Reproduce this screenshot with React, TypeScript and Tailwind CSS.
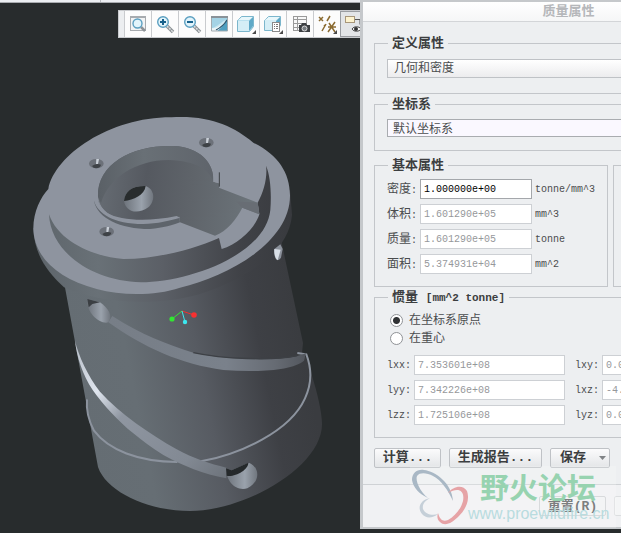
import { useState } from "react";

const massProps = [
  { id: "density", label: "密度", value: "1.000000e+00", unit: "tonne/mm^3" },
  { id: "volume", label: "体积", value: "1.601290e+05", unit: "mm^3" },
  { id: "mass", label: "质量", value: "1.601290e+05", unit: "tonne" },
  { id: "area", label: "面积", value: "5.374931e+04", unit: "mm^2" },
];

const inertia = [
  { a: "lxx", av: "7.353601e+08", b: "lxy", bv: "0.000000e+00" },
  { a: "lyy", av: "7.342226e+08", b: "lxz", bv: "-4.215370e+05" },
  { a: "lzz", av: "1.725106e+08", b: "lyz", bv: "0.000000e+00" },
];

const MONO = "font-['Liberation_Mono','Noto_Sans_CJK_SC',monospace]";

const fieldsetCls = "border border-[#c3c6ca] px-3 min-w-0";
const legendCls = "ml-px px-1 pt-[2px] text-[13px] leading-4 font-bold text-[#3c3e40]";
const disabledInput =
  "h-5 border border-[#cdd0d4] bg-white px-[3px] text-[10px] text-[#96989b]";
const buttonCls =
  "h-5 rounded-[2px] border border-[#bfc2c6] bg-linear-to-b from-[#fbfbfc] to-[#e4e6e8] text-[13px] leading-4 font-bold text-[#3c3e40]";

function Lens({ sign }: { sign?: string }) {
  return (
    <g>
      <path d="M12 12l6 6" stroke="#8d9296" strokeWidth="3.500" />
      <path d="M12 12l6 6" stroke="#dfe2e4" strokeWidth="1.500" strokeDasharray="2 1" />
      <circle cx="8" cy="8" r="5.300" fill="#e2f4fb" stroke="#5b9fc0" strokeWidth="1.400" />
      {sign && <path d={sign} stroke="#17618c" strokeWidth="2" />}
    </g>
  );
}

function Corner() {
  return <path d="M20 16v4h-4z" fill="#4a4a4a" />;
}

const tools = [
  {
    name: "重新调整",
    icon: (
      <g>
        <rect x="2.500" y="2.500" width="15" height="14" fill="#f2f3f4" stroke="#a7abaf" />
        <path d="M2 3.500h16" stroke="#a7abaf" />
        <path d="M13 13l4 4" stroke="#8d9296" strokeWidth="2.500" />
        <circle cx="9.500" cy="9.500" r="4.500" fill="#e2f4fb" stroke="#5b9fc0" strokeWidth="1.400" />
      </g>
    ),
  },
  { name: "放大", icon: <Lens sign="M5 8h6M8 5v6" /> },
  { name: "缩小", icon: <Lens sign="M5 8h6" /> },
  {
    name: "重画",
    icon: (
      <g>
        <rect x="3" y="3" width="15" height="14" fill="#c9e8f2" />
        <path d="M3 3h15v2C12 8 8 13 3 14z" fill="#a4d3e5" />
        <path d="M18 5v12H8c2-3 6-6 10-12z" fill="#4f9fc0" />
        <path d="M3 14c4 1 8-2 15-8-4 6-7 9-10 11H3z" fill="#eef6f8" />
        <path d="M7 16c4-2 8-5 11-10" stroke="#2d5870" strokeWidth="1.300" fill="none" />
        <path d="M2.500 3h16v14h-16z" fill="none" stroke="#a3abb0" />
        <path d="M2 3h17" stroke="#8a9298" strokeWidth="2" />
      </g>
    ),
  },
  {
    name: "显示样式",
    icon: (
      <g>
        <path d="M1.500 6.500l4-4h12v10l-4 5h-12z" fill="#b9e0ee" stroke="#7bb6cc" />
        <path d="M2 6l4-3h11l-4 3z" fill="#e8f7fb" />
        <path d="M13 7l4-4v9l-4 5z" fill="#5fa9c7" />
        <path d="M2 7h11v10H2z" fill="#d5eef6" />
        <Corner />
      </g>
    ),
  },
  {
    name: "已命名视图",
    icon: (
      <g>
        <path d="M1.500 6.500l4-4h12v9l-4 5h-12z" fill="#d5eef6" stroke="#7bb6cc" />
        <path d="M2 6l4-3h11l-4 3z" fill="#e8f7fb" />
        <path d="M13 7l4-4v6h-4z" fill="#5fa9c7" />
        <rect x="9.500" y="8.500" width="7" height="9" fill="#fff" stroke="#8a8a8a" />
        <path d="M11 10.500h1M13 10.500h2M11 12.500h1M13 12.500h2M11 14.500h1M13 14.500h2" stroke="#777" />
        <Corner />
      </g>
    ),
  },
  {
    name: "视图管理器",
    icon: (
      <g>
        <rect x="3.500" y="2.500" width="13" height="14" fill="#f8f8f8" stroke="#9a9a9a" />
        <path d="M3 5.500h14M3 9.500h14M3 13.500h14M7.500 3v13" stroke="#9a9a9a" />
        <path d="M9 11h2l1-2h4l1 2h3v7H9z" fill="#3c3f42" />
        <circle cx="14.500" cy="14.500" r="2.500" fill="#777c80" stroke="#dcdcdc" />
      </g>
    ),
  },
  {
    name: "基准显示",
    icon: (
      <g stroke="#8a6a30" strokeWidth="1.500" fill="none">
        <path d="M2 3l4 4M6 3L2 7M10 7l3-5M8 11l-1 1" />
        <path d="M9 10l-4 7M12 9l6 9M18 8l-7 10M11 13h8" />
        <path d="M20 16v4h-4z" fill="#4a4a4a" stroke="none" />
      </g>
    ),
  },
];

function Toolbar() {
  return (
    <div className="flex h-7 w-[242px] self-end overflow-hidden border-y border-l border-[#c9cbce] bg-[#eceef0]">
      <div className="w-[5px] shrink-0" />
      {tools.map((t) => (
        <button
          key={t.name}
          type="button"
          title={t.name}
          className="flex w-[27px] shrink-0 items-center justify-center border-l border-[#c9cbce] bg-[#fcfcfc]"
        >
          <svg width="21" height="21" viewBox="0 0 21 21">
            {t.icon}
          </svg>
        </button>
      ))}
      <button
        type="button"
        title="注释显示"
        className="flex w-[27px] shrink-0 items-center justify-center border border-[#9a9da1] bg-[#e3e5e7]"
      >
        <svg width="21" height="21" viewBox="0 0 21 21">
          <rect x="2.500" y="2.500" width="9" height="6" fill="#fdf3cf" stroke="#a8977a" />
          <path d="M12 5.500h5v5" stroke="#555" fill="none" />
          <path d="M9 15c2-3 7-3 9 0-2 3-7 3-9 0z" fill="#fff" stroke="#444" />
          <circle cx="13" cy="15" r="2" fill="#333" />
        </svg>
      </button>
    </div>
  );
}

function Model() {
  return (
    <svg className="block w-full" viewBox="0 38 360 495" role="img" aria-label="零件模型">
      <defs>
        <linearGradient id="body" gradientUnits="userSpaceOnUse" x1="78" y1="405" x2="305" y2="360">
          <stop offset="0" stopColor="#656d73" />
          <stop offset=".25" stopColor="#666e74" />
          <stop offset=".55" stopColor="#575b62" />
          <stop offset=".82" stopColor="#3e4045" />
          <stop offset="1" stopColor="#3a3c40" />
        </linearGradient>
        <linearGradient id="rim" gradientUnits="userSpaceOnUse" x1="40" y1="0" x2="816" y2="0">
          <stop offset="0" stopColor="#5d646a" />
          <stop offset=".25" stopColor="#697177" />
          <stop offset=".5" stopColor="#5b5f66" />
          <stop offset=".8" stopColor="#404247" />
          <stop offset="1" stopColor="#383a3e" />
        </linearGradient>
        <linearGradient id="bore" gradientUnits="userSpaceOnUse" x1="235" y1="250" x2="700" y2="300">
          <stop offset="0" stopColor="#666c73" />
          <stop offset=".3" stopColor="#555960" />
          <stop offset=".6" stopColor="#5f646a" />
          <stop offset="1" stopColor="#6c747a" />
        </linearGradient>
        <linearGradient id="chamfer" x1="0" y1="0" x2="1" y2="0">
          <stop offset="0" stopColor="#5a6066" />
          <stop offset=".4" stopColor="#697076" />
          <stop offset="1" stopColor="#5f646b" />
        </linearGradient>
        <linearGradient id="hole" x1="0" y1="0" x2="1" y2="0">
          <stop offset="0" stopColor="#6d737b" />
          <stop offset=".6" stopColor="#9aa2ac" />
          <stop offset="1" stopColor="#70767e" />
        </linearGradient>
        <linearGradient id="groove" gradientUnits="userSpaceOnUse" x1="75" y1="150" x2="530" y2="560">
          <stop offset="0" stopColor="#b5bcc6" />
          <stop offset=".25" stopColor="#dfe5ee" />
          <stop offset=".42" stopColor="#8f96a1" />
          <stop offset=".8" stopColor="#828993" />
          <stop offset="1" stopColor="#6d737b" />
        </linearGradient>
        <linearGradient id="groove2" gradientUnits="userSpaceOnUse" x1="175" y1="0" x2="765" y2="0">
          <stop offset="0" stopColor="#777e87" />
          <stop offset=".6" stopColor="#7a818b" />
          <stop offset=".85" stopColor="#666b73" />
          <stop offset="1" stopColor="#53575e" />
        </linearGradient>
      </defs>

      <path
        d="M64 282L98 467C107 493 150 511 190 511C245 511 322 467 322 424C322 412 317 392 312 376C311 366 307 357 302 353L303 343L280 235Z"
        fill="url(#body)"
      />

      {/* grooves and lower holes */}
      <g transform="translate(50 290) scale(.33333)">
        <path d="M111 328C108 362 115 390 132 422C175 480 265 515 382 516" stroke="#8c939e" strokeWidth="6" fill="none" />
        <path d="M742 189L769 193C785 235 786 280 765 325C720 425 570 492 453 514" stroke="#8c939e" strokeWidth="6" fill="none" />
        <path
          d="M187 78C275 135 350 162 430 188C520 208 670 214 735 200L768 190L762 212C725 243 620 247 520 240C395 224 280 172 175 97Z"
          fill="url(#groove2)"
        />
        <path d="M430 188C520 208 670 212 742 197" stroke="#3d4045" strokeWidth="4" fill="none" />
        <path
          d="M75 152C86 198 112 255 150 305C210 372 300 432 380 478C430 505 480 522 529 533V565C460 552 400 528 340 495C305 474 275 451 250 430C205 394 160 345 128 300C98 255 80 200 75 152Z"
          fill="url(#groove)"
        />
        <path d="M112 27L150 37C175 55 190 78 175 97C150 104 108 70 112 27Z" fill="url(#hole)" />
        <path d="M112 27L150 37L127 42L116 52Z" fill="#3b3f43" />
        <path d="M528 535L545 541L597 518C630 532 632 575 592 595C558 605 528 575 528 535Z" fill="url(#hole)" />
        <path d="M528 535L545 541L595 518C595 540 555 562 530 557Z" fill="#25292b" />
      </g>

      {/* flange and top face */}
      <g transform="translate(20 105) scale(.33333)">
        <path
          d="M40 370C42 445 80 500 132 547C250 600 430 605 560 560C670 520 805 450 816 330L810 255Z"
          fill="url(#rim)"
        />
        <path d="M763 432L781 418L788 432L783 458C771 475 761 460 763 432Z" fill="#8b919b" />
        <path d="M763 432L782 434L773 466C764 457 762 445 763 432Z" fill="#d9dfe7" />
        <path
          d="M40 370C40 320 63 275 85 252C105 150 270 36 455 37C575 31 640 65 700 113C775 150 809 203 810 270C812 410 625 515 480 548C405 573 305 572 230 552C110 520 42 455 40 370Z"
          fill="#8e949f"
        />
        <path
          d="M87 328C115 410 220 455 310 462C410 462 520 433 597 399L605 432C655 418 705 370 718 328L713 293C732 260 743 215 738 182C751 211 755 265 751 315C737 452 500 532 363 532C220 528 92 445 87 328Z"
          fill="url(#rim)"
        />
        <path
          d="M234 275C230 175 340 119 460 123C540 126 584 175 580 230L597 235V248L713 293L718 328L667 308C650 342 620 380 585 392L480 352L478 335C390 355 245 365 234 275Z"
          fill="url(#bore)"
        />
        <path
          d="M234 275C230 175 340 119 460 123C540 126 584 175 580 230C568 195 530 168 445 165C350 165 265 218 243 295Z"
          fill="url(#chamfer)"
        />
        <path d="M650 290L713 293L718 328L667 308Z" fill="#686d74" />
        <path d="M580 207L600 215V247L597 235L580 230Z" fill="#8e949f" />
        <path d="M598 202V245" stroke="#3b3f43" strokeWidth="3" />
        <path
          d="M222 288C233 340 300 372 390 372C430 369 460 360 480 352L478 335C390 355 310 350 270 330C250 320 238 305 235 288Z"
          fill="#5e646b"
        />
        <path
          d="M222 288C233 325 280 357 370 357C410 356 455 346 480 338L470 333C380 352 300 346 262 324C248 314 238 300 235 288Z"
          fill="#8e949f"
        />
        <path d="M312 288C315 260 335 242 377 243C403 252 408 285 385 307C352 330 317 321 312 288Z" fill="url(#hole)" />
        <path d="M312 288C315 260 335 242 377 243C374 270 340 285 312 288Z" fill="#282c2d" />
        {[
          [229, 176],
          [559, 113],
          [260, 380],
        ].map(([x, y]) => (
          <g key={x}>
            <ellipse cx={x} cy={y} rx="22" ry="14" fill="#6c7179" />
            <path d={`M${x} ${y - 14}h8l-3 15h-6z`} fill="#c9cfd7" />
            <path d={`M${x - 13} ${y + 7}q12 -9 27 -4q-2 10 -15 11q-8 0 -12 -7z`} fill="#3e4246" />
          </g>
        ))}
      </g>

      {/* spin centre */}
      <path d="M182 311L172 319" stroke="#32e632" />
      <path d="M182 311L194 315" stroke="#f03030" />
      <path d="M182 311L185 322" stroke="#3ce8f0" />
      <circle cx="172" cy="319" r="2.600" fill="#32e632" />
      <circle cx="194" cy="315" r="2.800" fill="#f83030" />
      <circle cx="185" cy="322" r="2.200" fill="#3ce8f0" />
    </svg>
  );
}

function Watermark() {
  return (
    <div className="pointer-events-none absolute top-[464px] left-[47px] flex h-[62px] w-[206px] bg-white/20">
      <svg width="58" height="58" viewBox="0 0 58 58" className="mt-[2px] shrink-0" fill="none">
        <path
          d="M18 30C9 26 3 19 2 12C2 5 7 1 14 2C25 3 42 15 43 33C38 22 31 12 23 8C17 5 10 4 7 8C5 12 10 24 18 30Z"
          fill="#a9b8c5"
        />
        <path d="M20 30C10 32 7 40 12 46C16 51 23 50 28 46C22 48 15 46 13 41C12 36 15 33 20 30Z" fill="#c5cfd8" />
        <path
          d="M38 25C43 18 53 16 57 23C60 32 56 41 49 48C42 55 35 59 30 54C27 52 27 48 28 45C30 52 33 54 38 52C45 48 51 41 53 33C55 22 48 19 38 25Z"
          fill="#e6a3a6"
        />
      </svg>
      <div className="flex shrink-0 flex-col">
        <span className="ml-3 pt-1 font-['Noto_Sans_CJK_SC',sans-serif] text-[29px] leading-8 font-bold text-[#97d3b0]">
          野火论坛
        </span>
        <span className="font-['Liberation_Sans',sans-serif] text-[16px] leading-6 text-[#b9dcdf]">
          www.proewildfire.cn
        </span>
      </div>
    </div>
  );
}

function MassDialog() {
  const [origin, setOrigin] = useState(true);
  const [density, setDensity] = useState(massProps[0].value);

  return (
    <section
      className={`relative w-[416px] shrink-0 border-2 border-l-3 border-[#c5c8cb] bg-[#edeff1] text-[12px] text-[#4a4c4e] ${MONO}`}
    >
      <h1 className="h-5 border-b border-[#d3d5d8] bg-linear-to-b from-white to-[#f5f6f7] text-center text-[13px] leading-5 font-bold text-[#b5b7ba]">
        质量属性
      </h1>

      <div className="px-[11px] pt-3">
        <fieldset className={`${fieldsetCls} pt-[7px] pb-[15px]`}>
          <legend className={legendCls}>定义属性</legend>
          <select
            aria-label="定义属性"
            className="block h-[19px] w-full appearance-none border border-[#bfc2c6] bg-linear-to-b from-white to-[#ececee] px-[6px] pt-px text-[12px] leading-4"
          >
            <option>几何和密度</option>
          </select>
        </fieldset>

        <fieldset className={`${fieldsetCls} mt-px pt-[6px] pb-[13px]`}>
          <legend className={legendCls}>坐标系</legend>
          <input
            aria-label="坐标系"
            defaultValue="默认坐标系"
            className="block h-[18px] w-full border border-[#a9acb0] bg-[#faf8ff] px-[5px] text-[12px] leading-4"
          />
        </fieldset>

        <div className="mt-[5px] flex gap-[5px]">
          <fieldset className={`${fieldsetCls} w-[234px] shrink-0 pt-[5px] pb-3`}>
            <legend className={legendCls}>基本属性</legend>
            <div className="flex flex-col gap-[5px]">
              {massProps.map((p, i) => (
                <div key={p.id} className="flex h-5 items-center">
                  <label htmlFor={p.id} className="w-[33px] shrink-0 pt-[2px] leading-5 whitespace-nowrap">
                    {p.label}
                    <span className="text-[10px]">:</span>
                  </label>
                  {i === 0 ? (
                    <input
                      id={p.id}
                      value={density}
                      onChange={(e) => setDensity(e.target.value)}
                      className="h-5 w-28 shrink-0 border border-[#a4a7ab] bg-white px-[3px] text-[10px] text-black"
                    />
                  ) : (
                    <input id={p.id} readOnly value={p.value} className={`${disabledInput} w-28 shrink-0`} />
                  )}
                  <span className="ml-[3px] text-[10px]">{p.unit}</span>
                </div>
              ))}
            </div>
          </fieldset>
          <fieldset aria-label="主惯量" className="mt-[9px] min-w-0 flex-1 border border-[#c3c6ca]" />
        </div>

        <fieldset className={`${fieldsetCls} mt-px pt-[5px] pb-3`}>
          <legend className={legendCls}>
            惯量 <span className="text-[11px]">[mm^2 tonne]</span>
          </legend>
          {["在坐标系原点", "在重心"].map((text, i) => (
            <label key={text} className="flex h-[18px] items-center gap-[6px] pl-[3px]">
              <input
                type="radio"
                name="origin"
                checked={origin === (i === 0)}
                onChange={() => setOrigin(i === 0)}
                className="size-[13px] appearance-none rounded-full border border-[#8f9296] bg-white checked:bg-[radial-gradient(circle,#303234_0_3px,#ffffff_4px)]"
              />
              <span className="pt-[2px]">{text}</span>
            </label>
          ))}
          <div className="mt-2 flex flex-col gap-[5px]">
            {inertia.map((r) => (
              <div key={r.a} className="flex h-5 items-center text-[10px]">
                <label htmlFor={r.a} className="w-[27px] shrink-0">
                  {r.a}:
                </label>
                <input id={r.a} readOnly value={r.av} className={`${disabledInput} w-[151px] shrink-0`} />
                <label htmlFor={r.b} className="ml-[10px] w-[27px] shrink-0">
                  {r.b}:
                </label>
                <input id={r.b} readOnly value={r.bv} className={`${disabledInput} min-w-0 flex-1`} />
              </div>
            ))}
          </div>
        </fieldset>

        <div className="mt-[10px] flex gap-2">
          <button type="button" className={`${buttonCls} w-[67px]`}>
            计算...
          </button>
          <button type="button" className={`${buttonCls} w-[93px]`}>
            生成报告...
          </button>
          <button type="button" className={`${buttonCls} flex w-[60px] items-center justify-between pr-[3px] pl-[9px]`}>
            保存
            <svg width="7" height="4" viewBox="0 0 7 4">
              <path d="M0 0h7L3.500 4z" fill="#808386" />
            </svg>
          </button>
        </div>
      </div>

      <div className="mt-4 flex gap-2 border-t border-[#cfd2d5] bg-[#f0f1f3] pt-[11px] pb-[11px] pl-44">
        <button
          type="button"
          className="h-5 w-[67px] rounded-[2px] border border-[#cfd1d4] bg-[#f1f2f3] pt-px text-[13px] leading-4 font-bold text-[#5c5e60]"
        >
          重置<span>(R)</span>
        </button>
        <button type="button" aria-label="关闭" className="h-5 w-[67px] rounded-[2px] border border-[#dcdee0] bg-[#f4f5f6]" />
      </div>
      <Watermark />
    </section>
  );
}

export default function App() {
  return (
    <main className="flex min-h-screen items-start overflow-hidden bg-[#282c2d]">
      <div className="flex w-[360px] shrink-0 flex-col">
        <div className="flex h-[3px] w-full border-b border-[#a9acb0] bg-[#eceff2]">
          <div className="w-[101px] border-r border-[#b9bcc0]" />
        </div>
        <div className="h-[7px]" />
        <Toolbar />
        <Model />
      </div>
      <MassDialog />
    </main>
  );
}
